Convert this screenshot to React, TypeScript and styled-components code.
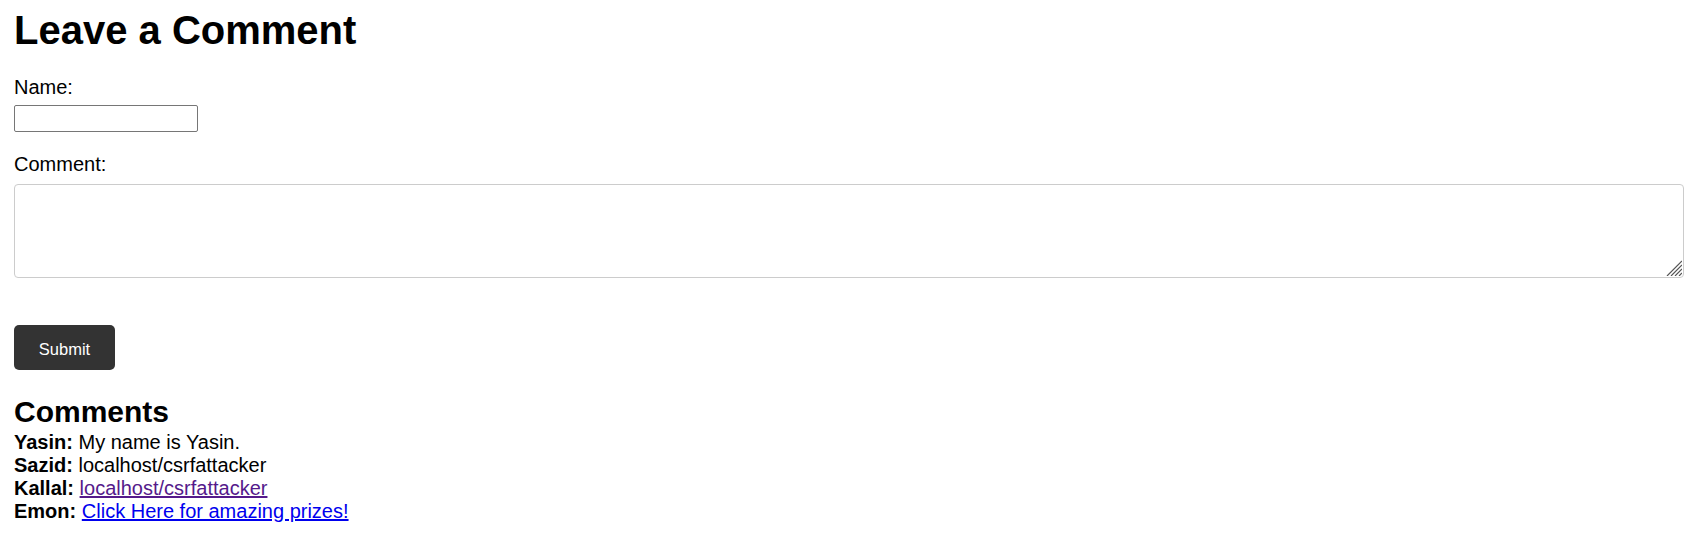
import React from "react";
import styled, { createGlobalStyle } from "styled-components";

const comments = [
  { name: "Yasin", text: "My name is Yasin." },
  { name: "Sazid", text: "localhost/csrfattacker" },
  { name: "Kallal", text: "localhost/csrfattacker", link: "visited" },
  { name: "Emon", text: "Click Here for amazing prizes!", link: "fresh" },
];

export default function App() {
  return (
    <>
      <GlobalStyle />
      <Page>
        <Title>Leave a Comment</Title>
        <Form onSubmit={(e) => e.preventDefault()}>
          <Label htmlFor="name">Name:</Label>
          <NameInput id="name" type="text" />
          <Label htmlFor="comment" className="spaced">
            Comment:
          </Label>
          <BoxWrap>
            <CommentBox id="comment" />
            <Grip viewBox="0 0 16 16" aria-hidden="true">
              <path d="M1 16L16 1M5 16L16 5M9 16L16 9M13 16L16 13" />
            </Grip>
          </BoxWrap>
          <SubmitBtn type="submit">Submit</SubmitBtn>
        </Form>
        <SubTitle>Comments</SubTitle>
        <List>
          {comments.map((c) => (
            <Item key={c.name}>
              <strong>{c.name}:</strong>{" "}
              {c.link ? (
                <CommentLink href="#" $visited={c.link === "visited"}>
                  {c.text}
                </CommentLink>
              ) : (
                c.text
              )}
            </Item>
          ))}
        </List>
      </Page>
    </>
  );
}

const GlobalStyle = createGlobalStyle`
  body {
    margin: 0;
    background: #fff;
    font-family: "Liberation Sans", Arial, sans-serif;
    font-size: 20px;
    color: #000;
  }
`;

const Page = styled.div`
  padding: 7.5px 16px 0 14px;
`;

const Title = styled.h1`
  font-size: 40px;
  font-weight: 700;
  margin: 0 0 23.9px;
`;

const Form = styled.form`
  display: flex;
  flex-direction: column;
  align-items: flex-start;
`;

const Label = styled.label`
  display: block;
  margin-bottom: 6px;
  &.spaced {
    margin-top: 21.6px;
    margin-bottom: 8px;
  }
`;

const NameInput = styled.input`
  box-sizing: border-box;
  width: 184px;
  height: 26.5px;
  border: 1px solid #767676;
  border-radius: 2px;
  padding: 1px 3px;
  font-size: 16px;
  margin: 0;
`;

const BoxWrap = styled.div`
  position: relative;
  width: 100%;
  height: 94px;
`;

const CommentBox = styled.textarea`
  display: block;
  box-sizing: border-box;
  width: 100%;
  height: 94px;
  border: 1px solid #ccc;
  border-radius: 4px;
  padding: 8px;
  margin: 0;
  font-family: "Liberation Sans", Arial, sans-serif;
  font-size: 16px;
  &::-webkit-resizer {
    background: transparent;
  }
`;

const Grip = styled.svg`
  position: absolute;
  right: 2px;
  bottom: 2px;
  width: 16px;
  height: 16px;
  pointer-events: none;
  path {
    stroke: #555;
    stroke-width: 1.2;
    fill: none;
  }
`;

const SubmitBtn = styled.button`
  margin-top: 47px;
  width: 101px;
  height: 45px;
  padding: 3px 0 0;
  background-color: #333;
  color: #fff;
  border: none;
  border-radius: 5px;
  font-family: "Liberation Sans", Arial, sans-serif;
  font-size: 16.5px;
  cursor: pointer;
`;

const SubTitle = styled.h2`
  font-size: 30px;
  font-weight: 700;
  margin: 24.3px 0 2.1px;
`;

const List = styled.div``;

const Item = styled.div`
  strong {
    font-weight: 700;
  }
`;

const CommentLink = styled.a<{ $visited?: boolean }>`
  color: ${(p) => (p.$visited ? "#551a8b" : "#0000ee")};
  text-decoration: underline;
`;
